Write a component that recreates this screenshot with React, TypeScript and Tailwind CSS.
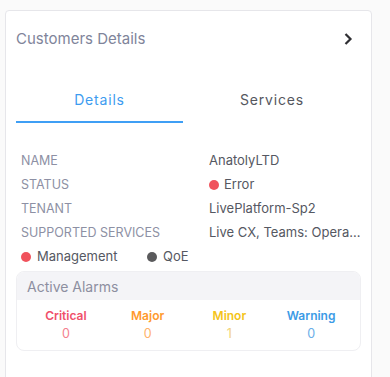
import React from "react";

const rows: { label: string; value: React.ReactNode }[] = [
  { label: "NAME", value: "AnatolyLTD" },
  {
    label: "STATUS",
    value: (
      <span className="flex items-center gap-[5px]">
        <span className="inline-block h-[10px] w-[10px] rounded-full bg-[#f0525c]" />
        Error
      </span>
    ),
  },
  { label: "TENANT", value: "LivePlatform-Sp2" },
  { label: "SUPPORTED SERVICES", value: "Live CX, Teams: Operator Connect" },
];

const alarms = [
  { label: "Critical", value: "0", c: "text-[#f0506a]", n: "text-[#f47f8e]" },
  { label: "Major", value: "0", c: "text-[#ff9a2e]", n: "text-[#ffb26a]" },
  { label: "Minor", value: "1", c: "text-[#f4c419]", n: "text-[#f2d27a]" },
  { label: "Warning", value: "0", c: "text-[#3c9be6]", n: "text-[#6aaee8]" },
];

export default function App() {
  return (
    <div
      className="h-[377px] w-[390px] overflow-hidden bg-[#fafafa] pl-[5px] pt-[10px]"
      style={{ fontFamily: "Inter, 'Noto Sans', sans-serif" }}
    >
      <div className="h-[400px] w-[367px] rounded-[4px] border border-[#e6e6ea] bg-white px-[10px]">
        <div className="mt-[19px] flex h-[18px] items-center justify-between">
          <span className="text-[15px] leading-[18px] text-[#80849a]">Customers Details</span>
          <svg width="10" height="14" viewBox="0 0 10 14" className="mr-[8px]">
            <path d="M2.5 2 L7.5 7 L2.5 12" fill="none" stroke="#2f2f33" strokeWidth="2.2" />
          </svg>
        </div>

        <div className="mt-[42px] flex">
          <div className="w-[167px] border-b-2 border-[#3f9ff5] pb-[11px] text-center text-[14px] leading-[20px] tracking-[0.8px] text-[#3d9cf0]">
            Details
          </div>
          <div className="flex-1 pb-[13px] text-center text-[14px] leading-[20px] tracking-[0.8px] text-[#55575e]">
            Services
          </div>
        </div>

        <div className="mt-[26px] pl-[5px]">
          {rows.map((r) => (
            <div key={r.label} className="flex h-[24px] items-center">
              <div className="w-[188px] shrink-0 text-[12.5px] text-[#8d90a4]">{r.label}</div>
              <div className="min-w-0 flex-1 truncate text-[13px] text-[#555862]">{r.value}</div>
            </div>
          ))}
          <div className="flex h-[24px] items-center text-[13px] text-[#555862]">
            <span className="flex w-[126px] items-center gap-[6px]">
              <span className="inline-block h-[10px] w-[10px] rounded-full bg-[#f0525c]" />
              Management
            </span>
            <span className="flex items-center gap-[6px]">
              <span className="inline-block h-[10px] w-[10px] rounded-full bg-[#5a5a5c]" />
              QoE
            </span>
          </div>
        </div>

        <div className="mt-[2px] overflow-hidden rounded-[8px] border border-[#efeff2]">
          <div className="flex h-[28px] items-center bg-[#f4f4f7] pl-[10px] text-[14px] text-[#8d8fa0]">
            Active Alarms
          </div>
          <div className="grid grid-cols-4 px-[8px] pb-[7px] pt-[7px]">
            {alarms.map((a) => (
              <div key={a.label} className="flex flex-col items-center">
                <span className={`text-[12px] font-semibold leading-[18px] ${a.c}`}>{a.label}</span>
                <span className={`text-[12.5px] leading-[18px] ${a.n}`}>{a.value}</span>
              </div>
            ))}
          </div>
        </div>
      </div>
    </div>
  );
}
